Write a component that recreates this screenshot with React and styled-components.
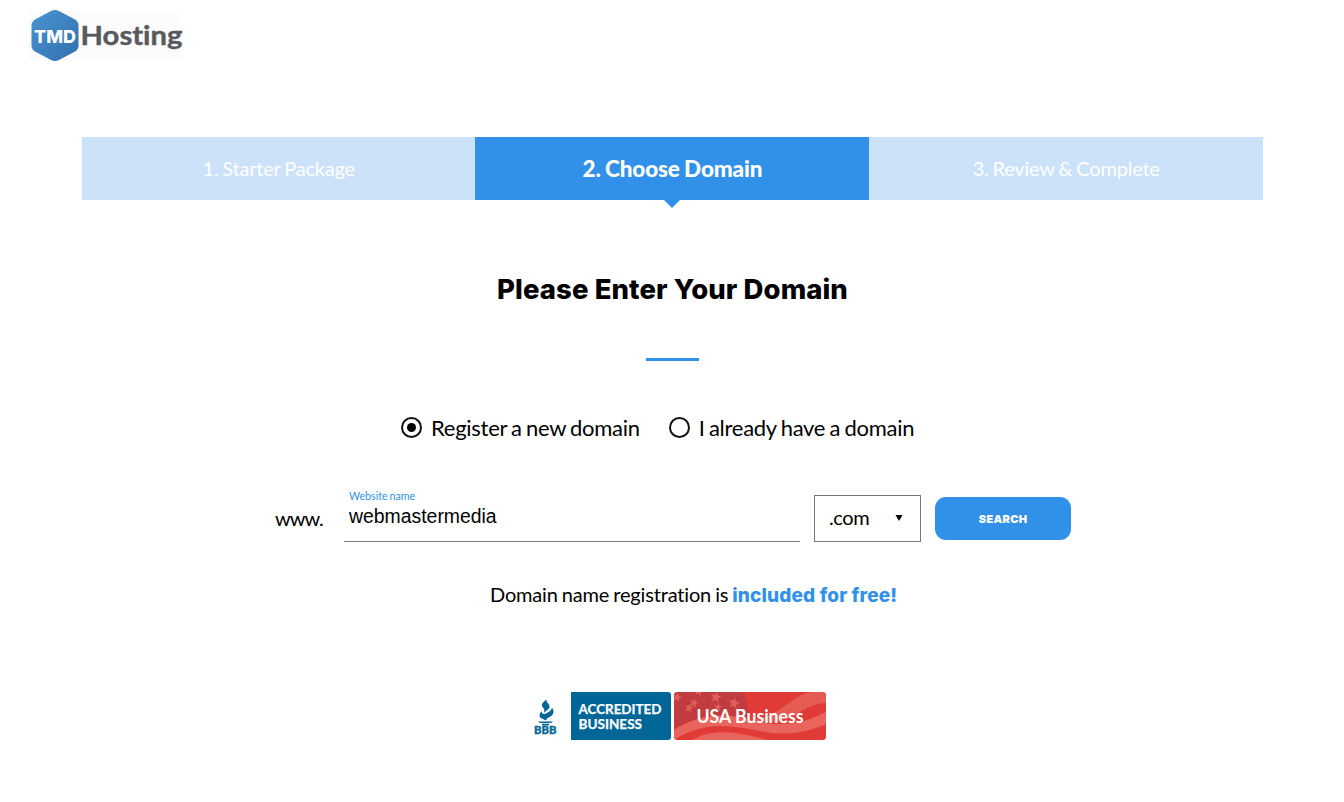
import React, { useState } from "react";
import styled, { createGlobalStyle } from "styled-components";

const steps = ["1. Starter Package", "2. Choose Domain", "3. Review & Complete"];

const Logo = () => (
  <LogoSvg viewBox="0 0 154 52">
    <defs>
      <linearGradient id="hex" x1="0" y1="0" x2="1" y2="1">
        <stop offset="0" stopColor="#4a94d0" />
        <stop offset="1" stopColor="#3070ae" />
      </linearGradient>
    </defs>
    <rect width="153" height="51" fill="#fcfcfe" />
    <path
      d="M22 1Q26 -1 30 1L46 9.500Q49.500 12 49.500 15V36Q49.500 39 46 41.500L30 50Q26 52 22 50L6 41.500Q2.500 39 2.500 36V15Q2.500 12 6 9.500Z"
      fill="url(#hex)"
    />
    <LogoText x="5" y="32.500" fontSize="18" textLength="42" lengthAdjust="spacingAndGlyphs" fill="#fff" $black>
      TMD
    </LogoText>
    <LogoText x="51.500" y="35" fontSize="27" textLength="102" lengthAdjust="spacingAndGlyphs" fill="#58595d" stroke="#58595d" strokeWidth="0.400">
      Hosting
    </LogoText>
  </LogoSvg>
);

const BbbBadge = () => (
  <BbbSvg viewBox="0 0 140 48">
    <path d="M40 0H137Q140 0 140 3V45Q140 48 137 48H40Z" fill="#006697" />
    <path d="M15.500 7.500C15 11 19 11.500 18.500 15C18 18 14.500 18.500 13 21C13 19 14 17.500 12.500 16C9 13 12 10 15.500 7.500Z" fill="#006697" />
    <path d="M21 15.500L22 17.500C23.500 21 21.500 23.500 18.500 25C16.500 26 15.500 27 15 28.500L9 25.500C8 23 9 20.500 10.500 19.500C11 22 13 22.500 15 21.500C18 20 20.500 18.500 21 15.500Z" fill="#006697" />
    <path d="M7 29.500H22L20 31H9ZM11 31.800H18V33.500H11Z" fill="#006697" />
    <BadgeText x="3" y="42" fontSize="10.500" textLength="22.500" lengthAdjust="spacingAndGlyphs" fill="#006697" stroke="#006697" strokeWidth="0.300" $black>
      BBB
    </BadgeText>
    <BadgeText x="47.500" y="22" fontSize="13.600" textLength="83" lengthAdjust="spacingAndGlyphs" fill="#fff" stroke="#fff" strokeWidth="0.250">
      ACCREDITED
    </BadgeText>
    <BadgeText x="47.500" y="37" fontSize="13.600" textLength="63.500" lengthAdjust="spacingAndGlyphs" fill="#fff" stroke="#fff" strokeWidth="0.250">
      BUSINESS
    </BadgeText>
  </BbbSvg>
);

const starPath = "M0-6L1.500-2L6-2L2.500 1L4 5.500L0 3L-4 5.500L-2.500 1L-6-2L-1.500-2Z";
const stars = [
  [3, 5, 0.8],
  [25, -1, 0.8],
  [42, 5, 0.95],
  [20, 11, 0.75],
  [15, 16, 0.75],
  [60, 11, 0.95],
  [44, 15, 0.7],
];

const UsaBadge = () => (
  <UsaSvg viewBox="0 0 152 48">
    <defs>
      <clipPath id="flag">
        <rect width="152" height="48" rx="3.500" />
      </clipPath>
    </defs>
    <g clipPath="url(#flag)">
      <rect width="152" height="48" fill="#e13b37" />
      <path d="M80 28C100 26 115 8 132 1L140 0H152V11C134 11 120 27 99 30Z" fill="#e55c54" />
      <path d="M0 38C22 24 45 20 68 26C94 33 120 37 152 20V32C128 43 106 43 86 39C56 33 30 29 0 48Z" fill="#e8645c" />
      <path d="M18 48C42 34 70 42 94 48Z" fill="#e8645c" />
      <path d="M0 0H70L77 27C48 20 22 24 0 37Z" fill="#c23c3f" />
      {stars.map(([x, y, scale]) => (
        <path key={`${x}-${y}`} d={starPath} transform={`translate(${x} ${y}) rotate(12) scale(${scale})`} fill="#df5f59" />
      ))}
    </g>
    <BadgeText x="22.500" y="31" fontSize="18" textLength="107" lengthAdjust="spacingAndGlyphs" fill="#fff">
      USA Business
    </BadgeText>
  </UsaSvg>
);

const App = () => {
  const [choice, setChoice] = useState("new");
  const [name, setName] = useState("webmastermedia");

  return (
    <Page>
      <GlobalStyle />
      <Header>
        <Logo />
      </Header>
      <Steps>
        {steps.map((step, index) => (
          <Step key={step} $active={index === 1}>
            {step}
          </Step>
        ))}
      </Steps>
      <Title>Please Enter Your Domain</Title>
      <Divider />
      <Choices>
        <Choice onClick={() => setChoice("new")}>
          <Radio $checked={choice === "new"} />
          Register a new domain
        </Choice>
        <Choice onClick={() => setChoice("own")}>
          <Radio $checked={choice === "own"} />I already have a domain
        </Choice>
      </Choices>
      <SearchRow>
        <Prefix>www.</Prefix>
        <Field>
          <FieldLabel>Website name</FieldLabel>
          <FieldInput value={name} spellCheck={false} onChange={(e) => setName(e.target.value)} />
        </Field>
        <Extension>
          .com
          <Arrow viewBox="0 0 8 6">
            <path d="M0.500 0H7.500L4 6Z" />
          </Arrow>
        </Extension>
        <SearchButton>SEARCH</SearchButton>
      </SearchRow>
      <Note>
        Domain name registration is <Free>included for free!</Free>
      </Note>
      <Badges>
        <BbbBadge />
        <UsaBadge />
      </Badges>
    </Page>
  );
};

const GlobalStyle = createGlobalStyle`
  * {
    box-sizing: border-box;
  }
  body {
    margin: 0;
    background: #fff;
    color: #000;
    font-family: Lato, sans-serif;
    font-variant-ligatures: none;
  }
`;

const Page = styled.div`
  height: 802px;
  overflow: hidden;
`;

const Header = styled.header`
  height: 137px;
  padding: 10px 0 0 29px;
`;

const LogoSvg = styled.svg`
  display: block;
  width: 154px;
  height: 52px;
`;

const LogoText = styled.text`
  font-family: ${({ $black }) => ($black ? "Inter" : "Lato")}, sans-serif;
  font-weight: ${({ $black }) => ($black ? 800 : 700)};
`;

const Steps = styled.nav`
  display: grid;
  grid-template-columns: 393.4px 394px 1fr;
  width: 1181px;
  height: 63.4px;
  margin-left: 82px;
`;

const Step = styled.div`
  position: relative;
  text-align: center;
  line-height: 63px;
  color: #fff;
  background: ${({ $active }) => ($active ? "#3191e9" : "#cbe2f9")};
  font-size: ${({ $active }) => ($active ? "22.5px" : "20px")};
  font-weight: ${({ $active }) => ($active ? 900 : 400)};
  letter-spacing: ${({ $active }) => ($active ? "-0.15px" : "-0.2px")};
  word-spacing: ${({ $active }) => ($active ? "-0.8px" : "-1px")};

  &::after {
    content: "";
    display: ${({ $active }) => ($active ? "block" : "none")};
    position: absolute;
    top: 63px;
    left: calc(50% - 8px);
    border: 8px solid transparent;
    border-top-color: #3191e9;
    border-bottom: 0;
  }
`;

const Title = styled.h1`
  margin: 68.6px 0 0;
  padding-left: 1px;
  line-height: 40px;
  font-family: Inter, sans-serif;
  font-size: 27.5px;
  font-weight: 800;
  letter-spacing: 0.09px;
  text-align: center;
`;

const Divider = styled.div`
  width: 53px;
  height: 3px;
  margin: 49px 0 0 646px;
  background: #3191e9;
`;

const Choices = styled.div`
  display: flex;
  gap: 29px;
  margin: 51px 0 0 401px;
`;

const Choice = styled.label`
  display: flex;
  align-items: center;
  gap: 9px;
  height: 32px;
  font-size: 22px;
  letter-spacing: -0.27px;
  word-spacing: -1.1px;
  white-space: nowrap;
`;

const Radio = styled.span`
  display: flex;
  align-items: center;
  justify-content: center;
  width: 21px;
  height: 21px;
  border: 2px solid #111;
  border-radius: 50%;

  &::after {
    content: "";
    width: 9px;
    height: 9px;
    border-radius: 50%;
    background: ${({ $checked }) => ($checked ? "#000" : "transparent")};
  }
`;

const SearchRow = styled.div`
  display: flex;
  height: 55px;
  margin: 43px 0 0 275px;
`;

const Prefix = styled.span`
  width: 69px;
  padding-top: 19px;
  font-size: 20px;
  line-height: 24px;
  letter-spacing: -0.9px;
`;

const Field = styled.div`
  display: flex;
  flex-direction: column;
  width: 456px;
  padding: 2px 5px 0;
  border-bottom: 1px solid #777;
`;

const FieldLabel = styled.label`
  color: #3191e9;
  font-size: 10.7px;
  line-height: 14px;
  word-spacing: -1px;
`;

const FieldInput = styled.input`
  width: 100%;
  height: 27px;
  padding: 0;
  border: 0;
  outline: 0;
  background: none;
  font-family: "Liberation Sans", Arial, sans-serif;
  font-size: 19.4px;
`;

const Extension = styled.div`
  display: flex;
  align-items: center;
  justify-content: space-between;
  width: 107px;
  height: 47px;
  margin: 8px 14px 0;
  padding: 0 17px 2px 14px;
  border: 1px solid #777;
  font-size: 20px;
  letter-spacing: -0.4px;
`;

const Arrow = styled.svg`
  width: 8px;
  height: 6px;
  margin-top: 2px;
`;

const SearchButton = styled.button`
  width: 136px;
  height: 42.5px;
  margin-top: 10.5px;
  padding: 0;
  border: 0;
  border-radius: 11px;
  background: #3191e9;
  color: #fff;
  font-family: Inter, sans-serif;
  font-size: 11px;
  font-weight: 900;
  letter-spacing: 0.3px;
`;

const Note = styled.p`
  margin: 38px 0 0 490px;
  line-height: 28px;
  font-size: 20px;
  letter-spacing: -0.17px;
  word-spacing: -0.9px;
  white-space: nowrap;
`;

const Free = styled.strong`
  color: #3191e9;
  font-family: Inter, sans-serif;
  font-size: 19px;
  font-weight: 800;
  letter-spacing: 0.15px;
  word-spacing: 0;
`;

const Badges = styled.div`
  display: flex;
  gap: 3px;
  margin: 82.4px 0 0 531px;
`;

const BbbSvg = styled.svg`
  width: 140px;
  height: 48px;
`;

const UsaSvg = styled.svg`
  width: 152px;
  height: 48px;
`;

const BadgeText = styled.text`
  font-family: Lato, sans-serif;
  font-weight: ${({ $black }) => ($black ? 900 : 700)};
`;

export default App;
